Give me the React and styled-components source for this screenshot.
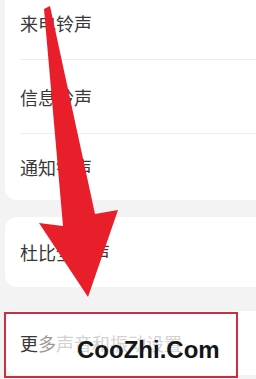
import styled, { createGlobalStyle } from "styled-components";

const GlobalStyle = createGlobalStyle`
    html, body {
        margin: 0;
        padding: 0;
        background: #f3f3f3;
        overflow: hidden;
    }
`

const rows = [
    { label: '来电铃声', height: 74, divider: true },
    { label: '信息铃声', height: 74, divider: true },
    { label: '通知铃声', height: 66, divider: false },
]

export default function App() {
    return (
        <>
            <GlobalStyle />
            <Screen>
                <List>
                    <Card $top={-14}>
                        {rows.map((r) => (
                            <Row key={r.label} $height={r.height} $divider={r.divider}>
                                <Label>{r.label}</Label>
                            </Row>
                        ))}
                    </Card>
                    <Card $top={17}>
                        <Row $height={70}>
                            <Label>杜比全景声</Label>
                        </Row>
                    </Card>
                    <Card $top={24}>
                        <Row $height={64}>
                            <Label>
                                更<Faded $tone="#9a9a9a">多</Faded>
                                <Faded $tone="#d2d2d2">声音和振动设置</Faded>
                            </Label>
                        </Row>
                    </Card>
                </List>

                <Highlight />

                <Arrow viewBox="0 0 256 379" width="256" height="379">
                    <polygon
                        points="44,9 50,6 95,214 118,210 88,297 39,223 63,226"
                        fill="#e81e2b"
                    />
                </Arrow>

                <Watermark>CooZhi.Com</Watermark>
            </Screen>
        </>
    )
}

const Screen = styled.div`
    position: relative;
    width: 256px;
    height: 379px;
    overflow: hidden;
    background: #f3f3f3;
`

const List = styled.div`
    display: flex;
    flex-direction: column;
    padding-left: 5px;
`

const Card = styled.div`
    margin-top: ${(p) => p.$top}px;
    margin-right: -24px;
    background: #ffffff;
    border-radius: 12px;
    display: flex;
    flex-direction: column;
`

const Row = styled.div`
    height: ${(p) => p.$height}px;
    box-sizing: border-box;
    margin-left: 15px;
    display: flex;
    align-items: center;
    border-bottom: ${(p) => (p.$divider ? '1px solid #ececec' : 'none')};
`

const Label = styled.span`
    font-family: "Noto Sans CJK SC", "Noto Sans", sans-serif;
    font-size: 18px;
    color: #383838;
`

const Faded = styled.span`
    color: ${(p) => p.$tone};
`

const Highlight = styled.div`
    position: absolute;
    left: 4px;
    top: 312px;
    width: 234px;
    height: 66px;
    box-sizing: border-box;
    border: 2px solid #c9303f;
`

const Arrow = styled.svg`
    position: absolute;
    left: 0;
    top: 0;
`

const Watermark = styled.div`
    position: absolute;
    left: 77px;
    top: 338px;
    font-family: "Liberation Sans", Arial, sans-serif;
    font-weight: bold;
    font-size: 24px;
    line-height: 24px;
    color: #151515;
`
